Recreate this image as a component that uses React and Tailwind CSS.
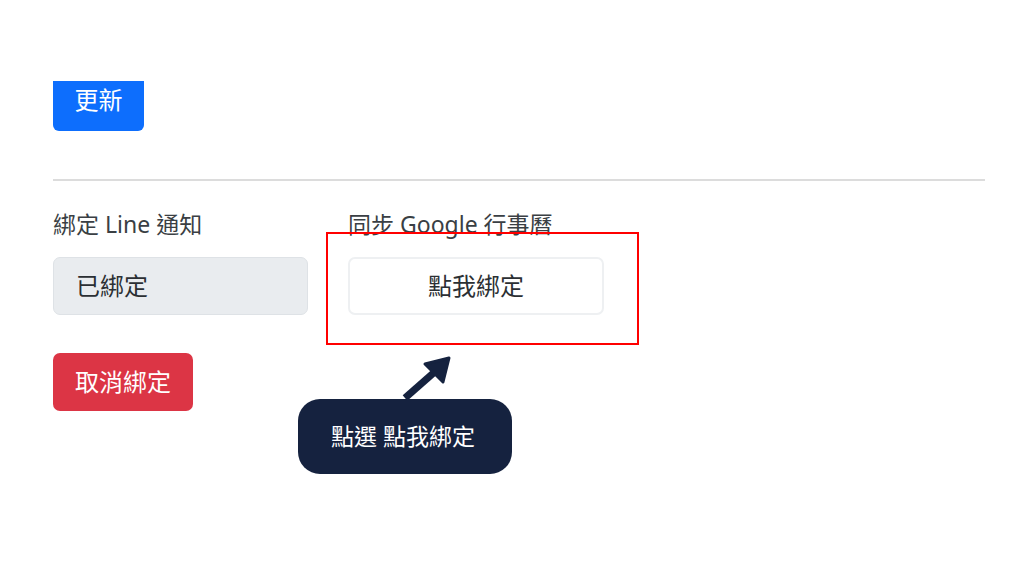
const font = { fontFamily: '"Noto Sans", "Noto Sans CJK TC", sans-serif' };

const Field = ({ label, children }) => (
  <div className="flex flex-col w-[256px]">
    <label className="text-[23px] leading-[30px] text-[#3a3f44] h-[30px] whitespace-nowrap">{label}</label>
    <div className="mt-[18px]">{children}</div>
  </div>
);

export default function App() {
  return (
    <div
      className="relative w-[1024px] h-[576px] bg-white overflow-hidden pl-[53px] pr-[39px] pt-[81px]"
      style={font}
    >
      {/* 更新按鈕 (上緣被裁切) */}
      <button className="w-[91px] h-[50px] pb-[12px] bg-[#0d6efd] text-white text-[24px] leading-none rounded-b-[6px]">
        更新
      </button>

      <hr className="mt-[48px] border-0 border-t-2 border-[#dcdcdc]" />

      <div className="mt-[28px] flex gap-[39px]">
        <Field label="綁定 Line 通知">
          <div className="h-[58px] w-[255px] rounded-[7px] bg-[#e9ecef] border border-[#dee2e6] flex items-center pl-[22px] text-[24px] text-[#2b2f33]">
            已綁定
          </div>
        </Field>
        <Field label="同步 Google 行事曆">
          <button className="h-[58px] w-[256px] rounded-[7px] bg-white border-2 border-[#eef0f2] text-[24px] text-[#2b2f33]">
            點我綁定
          </button>
        </Field>
      </div>

      <button className="mt-[38px] w-[140px] h-[58px] rounded-[7px] bg-[#dc3545] text-white text-[24px]">
        取消綁定
      </button>

      {/* 教學標註 */}
      <div className="absolute left-[326px] top-[232px] w-[313px] h-[113px] border-2 border-[#ff0000]" />

      <svg className="absolute left-[395px] top-[352px]" width="64" height="52" viewBox="0 0 64 52">
        <line x1="10" y1="46" x2="43" y2="17" stroke="#15223f" strokeWidth="7" />
        <polygon points="54,6 30,12 48,30" fill="#15223f" stroke="#15223f" strokeWidth="3" strokeLinejoin="round" />
      </svg>

      <div className="absolute left-[298px] top-[399px] w-[214px] h-[75px] rounded-[22px] bg-[#15223f] flex items-center pl-[33px] text-white text-[23px]">
        點選 點我綁定
      </div>
    </div>
  );
}
